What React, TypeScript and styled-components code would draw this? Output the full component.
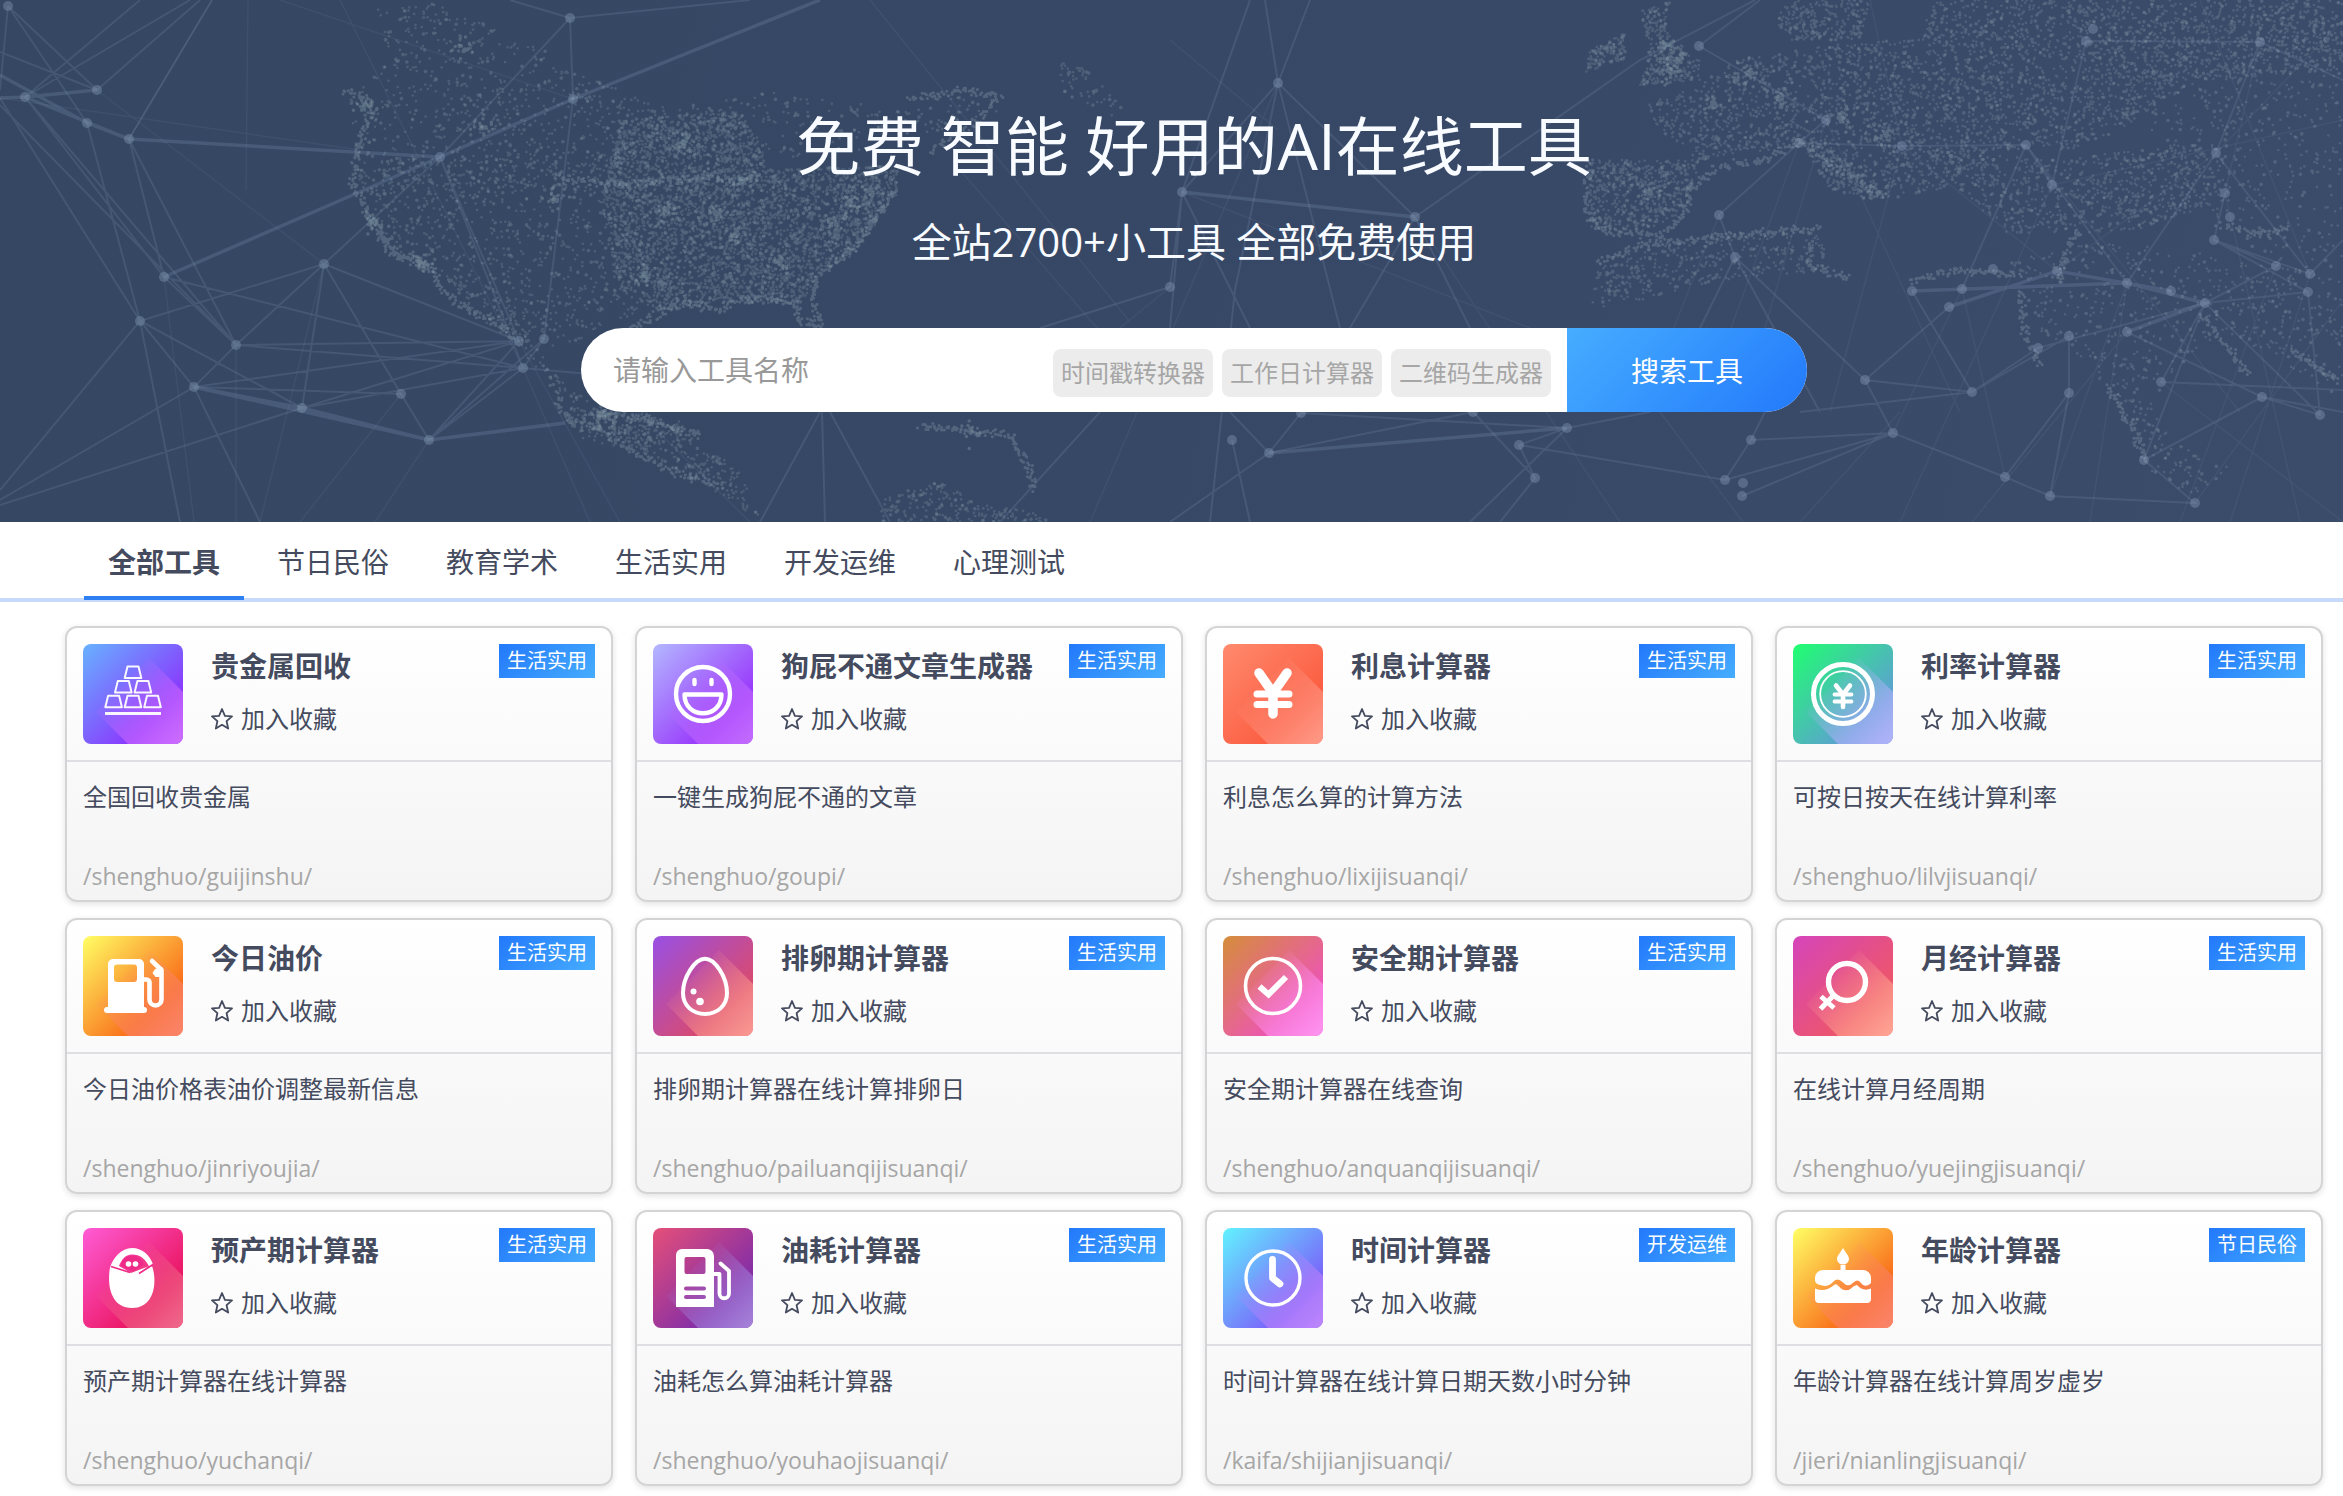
import React, { useId, useState } from 'react';
import styled, { createGlobalStyle } from 'styled-components';

const GlobalStyle = createGlobalStyle`
  *, *::before, *::after { box-sizing: border-box; }
  body {
    margin: 0;
    background: #fff;
    color: #454b5e;
    font-family: 'Open Sans', 'Noto Sans CJK SC', sans-serif;
    font-size: 24px;
  }
  h1, h2, p { margin: 0; font-weight: 400; }
  button, input { font: inherit; }
`;

/* ---------- hero backdrop: a dotted world map under a network of lines ---------- */

type Point = [number, number];

function createRandom(seed: number) {
  let state = seed;
  return () => {
    state = (state + 0x6d2b79f5) | 0;
    let t = Math.imul(state ^ (state >>> 15), 1 | state);
    t = (t + Math.imul(t ^ (t >>> 7), 61 | t)) ^ t;
    return ((t ^ (t >>> 14)) >>> 0) / 4294967296;
  };
}

function inside([x, y]: Point, shape: Point[]) {
  let hit = false;
  for (let i = 0, j = shape.length - 1; i < shape.length; j = i++) {
    const [xi, yi] = shape[i];
    const [xj, yj] = shape[j];
    if (yi > y !== yj > y && x < ((xj - xi) * (y - yi)) / (yj - yi) + xi) hit = !hit;
  }
  return hit;
}

const random = createRandom(20);

const dot = (x: number, y: number) => `M${x.toFixed(1)} ${y.toFixed(1)}h0.1`;

function fillDots(shape: Point[], count: number) {
  const xs = shape.map((p) => p[0]);
  const ys = shape.map((p) => p[1]);
  const left = Math.min(...xs);
  const top = Math.min(...ys);
  const width = Math.max(...xs) - left;
  const height = Math.max(...ys) - top;
  let path = '';
  let placed = 0;
  while (placed < count) {
    const p: Point = [left + random() * width, top + random() * height];
    if (inside(p, shape)) {
      path += dot(p[0], p[1]);
      placed += 1;
    }
  }
  return path;
}

function coastDots(line: Point[], spread: number) {
  let path = '';
  for (let i = 1; i < line.length; i++) {
    const [x1, y1] = line[i - 1];
    const [x2, y2] = line[i];
    const steps = Math.ceil(Math.hypot(x2 - x1, y2 - y1) / 1.4);
    for (let s = 0; s < steps; s++) {
      const t = s / steps;
      path += dot(
        x1 + (x2 - x1) * t + (random() + random() - 1) * spread,
        y1 + (y2 - y1) * t + (random() + random() - 1) * spread,
      );
    }
  }
  return path;
}

function cityDots([cx, cy]: Point) {
  let path = '';
  for (let i = 0; i < 26; i++) {
    const angle = random() * Math.PI * 2;
    const radius = random() * random() * 18;
    path += dot(cx + Math.cos(angle) * radius, cy + Math.sin(angle) * radius);
  }
  return path;
}

const regions: { shape: Point[]; count: number }[] = [
  { shape: [[370, 10], [430, 0], [520, 40], [600, 75], [660, 110], [600, 180], [500, 200], [360, 190], [350, 100], [390, 60]], count: 800 },
  { shape: [[355, 160], [620, 150], [640, 310], [560, 350], [470, 300], [430, 270], [395, 255], [372, 215]], count: 850 },
  { shape: [[620, 120], [740, 110], [770, 170], [900, 165], [897, 195], [875, 225], [860, 250], [815, 280], [800, 305], [720, 302], [660, 312], [620, 290], [600, 200]], count: 4200 },
  { shape: [[440, 270], [500, 290], [560, 380], [600, 410], [680, 420], [690, 440], [640, 450], [580, 425], [520, 350], [470, 310]], count: 260 },
  { shape: [[560, 410], [620, 400], [680, 430], [740, 470], [760, 520], [730, 500], [650, 455], [580, 440]], count: 300 },
  { shape: [[880, 500], [940, 480], [980, 505], [1030, 510], [1050, 522], [880, 522]], count: 200 },
  { shape: [[640, 110], [760, 90], [900, 110], [990, 90], [1000, 110], [880, 150], [780, 160]], count: 220 },
  { shape: [[1060, 60], [1090, 70], [1125, 110], [1110, 120], [1060, 90]], count: 60 },
  { shape: [[1640, 10], [1670, 0], [1665, 30], [1700, 60], [1700, 80], [1640, 85], [1650, 50]], count: 300 },
  { shape: [[1590, 50], [1625, 32], [1625, 60], [1585, 72]], count: 130 },
  { shape: [[1790, 0], [1870, 0], [1860, 40], [1790, 40], [1775, 20]], count: 240 },
  { shape: [[1735, 60], [1830, 45], [1920, 38], [1930, 0], [2343, 0], [2343, 70], [2200, 80], [2120, 130], [2070, 150], [1990, 150], [1940, 190], [1880, 200], [1810, 145], [1700, 160], [1670, 140], [1640, 105], [1700, 85]], count: 3600 },
  { shape: [[1590, 160], [1700, 160], [1685, 210], [1640, 235], [1590, 228]], count: 560 },
  { shape: [[1800, 140], [1830, 150], [1885, 190], [1870, 200], [1830, 190]], count: 180 },
  { shape: [[1600, 260], [1700, 235], [1820, 230], [1830, 270], [1720, 280], [1640, 300], [1590, 310]], count: 380 },
  { shape: [[1920, 150], [2060, 160], [2200, 140], [2225, 200], [2120, 235], [2010, 235], [1960, 190]], count: 800 },
  { shape: [[2100, 20], [2343, 20], [2343, 300], [2240, 240], [2160, 160]], count: 560 },
  { shape: [[2010, 260], [2110, 240], [2260, 260], [2343, 280], [2343, 400], [2280, 360], [2220, 330], [2150, 400], [2100, 380], [2040, 330]], count: 560 },
  { shape: [[2110, 380], [2150, 400], [2170, 440], [2240, 470], [2180, 500], [2140, 460]], count: 110 },
];

const coasts: Point[][] = [
  [[345, 90], [368, 98], [372, 118], [362, 128], [356, 155], [352, 185], [362, 200], [370, 218], [392, 254], [415, 258], [430, 272]],
  [[370, 218], [398, 256], [430, 266], [440, 285], [460, 305], [500, 325], [515, 340]],
  [[897, 190], [875, 218], [858, 245], [818, 275], [812, 300], [822, 325], [800, 322], [795, 300], [740, 298], [720, 310], [680, 302], [655, 315], [620, 335]],
  [[560, 180], [640, 184], [700, 178], [760, 180]],
  [[555, 395], [570, 420], [600, 430], [640, 455], [680, 475], [725, 485]],
  [[600, 412], [640, 418], [700, 435], [690, 430]],
  [[910, 100], [960, 90], [1000, 95], [980, 120], [930, 150]],
  [[920, 425], [960, 430], [1010, 435], [1030, 470], [1035, 490]],
  [[1590, 160], [1585, 210], [1600, 230], [1660, 235], [1685, 215], [1690, 190], [1720, 165], [1760, 162], [1800, 140], [1830, 165], [1885, 198]],
  [[1600, 262], [1640, 245], [1730, 235], [1820, 228]],
  [[1810, 245], [1810, 268], [1850, 278]],
  [[1910, 280], [1960, 270], [2020, 275]],
  [[2020, 290], [2025, 330], [2040, 368]],
  [[2060, 280], [2070, 240], [2080, 230]],
  [[2110, 385], [2120, 410], [2140, 440], [2145, 460]],
  [[2200, 315], [2230, 350], [2250, 375]],
  [[2290, 350], [2320, 370], [2340, 380]],
  [[2220, 225], [2260, 235], [2290, 228]],
];

const cities: Point[] = [
  [684, 145], [742, 180], [667, 210], [716, 213], [870, 190], [644, 275], [780, 262], [735, 235], [482, 127],
  [557, 200], [465, 50], [614, 422], [972, 432], [1670, 72], [1712, 103], [1737, 80], [1650, 192], [1886, 136], [1840, 118],
  [850, 205], [835, 222], [365, 105], [372, 222], [420, 262], [600, 415], [1680, 60], [1665, 45], [1750, 72], [1780, 100],
];

const dots = regions.map((r) => fillDots(r.shape, Math.round(r.count * 0.75))).join('');
const brightDots = regions.map((r) => fillDots(r.shape, Math.round(r.count * 0.2))).join('');
const coastline = coasts.map((c) => coastDots(c, 5)).join('');
const cityPath = cities.map(cityDots).join('');

const nodes: Point[] = [
  [8, 6], [97, 90], [25, 97], [87, 123], [129, 139], [570, 18], [573, 99], [440, 157], [324, 264], [164, 277],
  [140, 321], [236, 345], [194, 387], [302, 408], [401, 394], [429, 440], [519, 341], [544, 339], [523, 368],
  [1170, 287], [1278, 83], [1182, 192], [1415, 217], [1232, 440], [1269, 453], [1301, 413], [1567, 428],
  [1519, 445], [1535, 478], [1473, 412], [1699, 46], [1826, 120], [1799, 143], [1719, 215], [1735, 257],
  [1902, 146], [2026, 145], [2052, 185], [2086, 41], [2093, 29], [2260, 42], [2216, 153], [2225, 193],
  [2230, 217], [2214, 240], [1993, 269], [2057, 271], [1912, 291], [1962, 289], [1949, 307], [2127, 283],
  [2171, 291], [2205, 303], [2276, 266], [2310, 274], [2308, 292], [2127, 332], [2069, 336], [2038, 348],
  [1865, 380], [1972, 392], [2069, 393], [1893, 433], [1751, 440], [1725, 480], [1743, 483], [1742, 496],
  [2005, 477], [2050, 496], [2144, 460], [2195, 503], [2161, 382], [2262, 397], [2320, 415],
];

const strongLines =
  'M0 75L87 123L129 139L440 157L573 99L820 0M440 157L164 277M302 408L194 387L429 440L565 423M302 408L429 440M0 98L25 97L97 90M25 97L129 139' +
  'M2127 283L2205 303L2127 332M1949 307L2057 271L2171 291M1912 291L2127 283M2205 303L2127 283M1182 192L1415 217M1269 453L1567 428';

const mediumLines =
  'M8 6L87 123M8 6L97 90M0 52L97 90M25 97L140 0M25 97L190 0M129 139L212 0M97 90L200 0M8 6L0 90M0 98L140 321L0 490M0 105L236 345M25 97L236 345M25 97L164 277M87 123L140 321M129 139L164 277M129 139L236 345' +
  'M510 0L570 18L750 0M570 18L573 99M570 18L440 157M573 99L544 339L523 368M440 157L324 264M440 157L519 341M440 157L523 368M324 264L140 321L302 408M324 264L236 345L519 341M324 264L519 341M324 264L401 394L429 440M324 264L302 408' +
  'M164 277L523 368L600 375M164 277L236 345L523 368M236 345L194 387L0 500M194 387L401 394M194 387L519 341M302 408L519 341M302 408L0 505M302 408L523 368L429 440L519 341M544 339L429 440M140 321L194 387L260 522M140 321L180 522' +
  'M1250 0L1182 192L1170 287M1310 0L1278 83L1182 192M1278 83L1235 290L1210 522M1278 83L1340 328M1265 0L1278 83L1415 217L1640 60L1755 0M1415 217L1350 328M1415 217L1470 328M1170 287L1040 328M1182 192L1250 328M1182 192L1170 328' +
  'M820 412L760 522M822 412L825 522M830 412L890 522M1100 412L1000 522M1230 412L1269 453L1301 413M1232 440L1250 522M1269 453L1473 412M1269 453L1170 522M1301 413L1567 428L1519 445L1535 478L1500 522M1473 412L1535 478M1519 445L1725 480L1893 433L1751 440L1765 412M1567 428L1650 412M1567 428L1470 522' +
  'M1699 46L1760 0M1699 46L1826 120L1799 143L1719 215L1735 257L1700 328M1799 143L1902 146L2026 145L2052 185M2026 145L1962 289M2026 145L2127 283M2086 41L2260 42L2343 80M2086 41L2052 185M2260 42L2216 153L2310 274M2216 153L2127 283' +
  'M2225 193L2214 240L2310 274M2214 240L2308 292M2214 240L2276 266L2205 303M2310 274L2343 240M2308 292L2205 303L2161 382L2343 390M1735 257L1865 380M1735 257L1820 412M1912 291L1972 392L2038 348L2205 303M1949 307L1865 380L1972 392L2069 336' +
  'M1865 380L1893 433L2005 477L2050 496L2195 503L2144 460L2205 303M1893 433L1742 496M1751 440L1725 480M2069 336L2069 393L2005 477M2069 393L2050 496M2127 332L2262 397L2343 412M2262 397L2144 460M2262 397L2320 415L2308 292M2205 303L2320 415M1972 392L1800 412';

const faintLines =
  'M0 98L360 150M97 90L324 264M248 0L246 190M280 0L573 99M212 0L129 139M340 0L523 368M164 277L194 522M236 345L236 522M324 264L260 522M401 394L300 522M429 440L375 522M600 375L750 522M523 368L590 522M519 341L620 522' +
  'M870 0L1130 322M960 170L1170 412M1170 40L1278 130M1278 83L1090 522M1182 192L1530 328M1415 217L1620 522M1170 287L1120 328M1826 120L1740 412M1799 143L1700 412M1719 215L1640 412M1826 120L1960 412M1902 146L2057 271M1870 0L1902 146L1830 412M2052 185L2343 120M2052 185L1900 522M2026 145L2240 412' +
  'M2200 0L2310 274M2343 20L2216 153L2057 271M2260 42L2225 193L2300 522M2310 274L2230 522M2276 266L2180 522M2127 283L2050 496M2127 283L2090 522M1962 289L1893 433M1962 289L2005 477M2127 332L1972 522M1660 412L1743 522M1900 412L1800 522M2343 300L2195 503M2161 382L2343 522';

const Backdrop = styled.svg`
  position: absolute;
  inset: 0;
  width: 100%;
  height: 100%;
`;

function HeroBackdrop() {
  return (
    <Backdrop viewBox="0 0 2343 522" preserveAspectRatio="xMidYMid slice" aria-hidden="true">
      <g fill="none" stroke="#8fa6b0" strokeLinecap="round">
        <path d={dots} strokeWidth="2.6" opacity="0.24" />
        <path d={brightDots} strokeWidth="3.6" opacity="0.28" />
        <path d={coastline} strokeWidth="3" opacity="0.32" />
        <path d={cityPath} strokeWidth="3.4" opacity="0.34" />
      </g>
      <g fill="none" stroke="#8aa0bd">
        <path d={strongLines} strokeWidth="3.5" opacity="0.22" />
        <path d={mediumLines} strokeWidth="2" opacity="0.18" />
        <path d={faintLines} strokeWidth="1.5" opacity="0.1" />
      </g>
      <g fill="#8ea3bd" opacity="0.36">
        {nodes.map(([x, y]) => (
          <circle key={`${x}-${y}`} cx={x} cy={y} r="5" />
        ))}
      </g>
    </Backdrop>
  );
}

/* ---------- hero ---------- */

const Hero = styled.header`
  position: relative;
  padding: 104px 0 110px 45px;
  background: linear-gradient(100deg, #354762 0%, #374866 50%, #3b4b6a 100%);
`;

const HeroContent = styled.div`
  position: relative;
  display: flex;
  flex-direction: column;
  align-items: center;
  color: #f8fbff;
`;

const Title = styled.h1`
  font-size: 64px;
  line-height: 84px;
`;

const Subtitle = styled.p`
  margin-top: 24px;
  font-size: 40px;
  line-height: 60px;
`;

const SearchForm = styled.form`
  display: flex;
  width: 1226px;
  max-width: 100%;
  height: 84px;
  margin-top: 56px;
  border-radius: 42px;
  overflow: hidden;
  background: #fff;
`;

const SearchInput = styled.input`
  flex: 1;
  min-width: 0;
  padding: 0 32px;
  border: 0;
  outline: 0;
  background: transparent;
  color: #454b5e;
  font-size: 28px;
  &::placeholder { color: #999; opacity: 1; }
`;

const HotList = styled.div`
  display: flex;
  align-items: center;
  gap: 9px;
  padding-top: 6px;
  margin-right: 16px;
`;

const HotLink = styled.a`
  padding: 0 8px;
  border-radius: 8px;
  background: #ececec;
  color: #a6a6a6;
  font-size: 24px;
  line-height: 48px;
  text-decoration: none;
`;

const SearchButton = styled.button`
  width: 240px;
  border: 0;
  background: linear-gradient(135deg, #46adff 0%, #2379fb 100%);
  color: #fff;
  font-size: 28px;
  cursor: pointer;
`;

/* ---------- category tabs ---------- */

const Tabs = styled.nav`
  display: flex;
  gap: 9px;
  height: 80px;
  padding-left: 84px;
  border-bottom: 4px solid #c7dafc;
`;

const Tab = styled.button<{ $active: boolean }>`
  width: 160px;
  height: 78px;
  padding: 4px 0 0;
  border: 0;
  border-bottom: 4px solid ${(p) => (p.$active ? '#2e80f2' : 'transparent')};
  background: none;
  color: #454b5e;
  font-size: 28px;
  font-weight: ${(p) => (p.$active ? 700 : 400)};
  cursor: pointer;
`;

/* ---------- tool cards ---------- */

const Grid = styled.main`
  display: grid;
  grid-template-columns: repeat(4, minmax(0, 1fr));
  gap: 16px 22px;
  padding: 24px 20px 10px 65px;
`;

const Card = styled.article`
  border: 2px solid #d4d4d6;
  border-radius: 12px;
  background: linear-gradient(#fff, #f4f4f4);
  box-shadow: 0 2px 6px rgba(0, 0, 0, 0.12);
`;

const CardHead = styled.div`
  display: flex;
  align-items: flex-start;
  padding: 16px;
  border-bottom: 2px solid #dfdfe3;
`;

const IconTile = styled.svg`
  flex: none;
  width: 100px;
  height: 100px;
  border-radius: 8px;
`;

const CardInfo = styled.div`
  display: flex;
  flex: 1;
  flex-direction: column;
  align-items: flex-start;
  gap: 12px;
  min-width: 0;
  margin-left: 28px;
`;

const CardTitle = styled.h2`
  font-size: 28px;
  font-weight: 700;
  line-height: 44px;
  white-space: nowrap;
`;

const FavouriteButton = styled.button`
  display: flex;
  align-items: center;
  gap: 8px;
  padding: 0;
  border: 0;
  background: none;
  color: #454b5e;
  font-size: 24px;
  line-height: 38px;
  cursor: pointer;
`;

const CategoryTag = styled.span`
  padding: 0 8px;
  background: linear-gradient(135deg, #2379fb, #46adff);
  color: #fff;
  font-size: 20px;
  line-height: 34px;
  white-space: nowrap;
`;

const CardBody = styled.div`
  display: flex;
  flex-direction: column;
  gap: 40px;
  padding: 16px 16px 4px;
`;

const Description = styled.p`
  line-height: 38px;
`;

const ToolPath = styled.a`
  color: #a6a6a6;
  font-size: 23px;
  line-height: 40px;
  text-decoration: none;
`;

const StarShape = styled.svg`
  width: 22px;
  height: 22px;
`;

function Star() {
  return (
    <StarShape viewBox="0 0 22 22" aria-hidden="true">
      <path
        d="M11 1L13.9 7.800L21 8.400L15.600 13.200L17.200 20.600L11 16.800L4.800 20.600L6.400 13.200L1 8.400L8.100 7.800Z"
        fill="none"
        stroke="currentColor"
        strokeWidth="1.800"
        strokeLinejoin="round"
      />
    </StarShape>
  );
}

/* ---------- tool icons, drawn on a 100 × 100 tile ---------- */

const ingot = (x: number, y: number) => `M${x + 2.8} ${y}h11l2.8 11.5h-16.6z`;

const glyphs: Record<string, React.ReactNode> = {
  gold: (
    <g fill="none" stroke="#fff" strokeWidth="2" strokeLinejoin="round" opacity="0.95">
      <path d={ingot(41.7, 22.5) + ingot(32, 37) + ingot(51.6, 37) + ingot(22.3, 51.7) + ingot(41.7, 51.7) + ingot(61.2, 51.7)} />
      <path d="M22 69.5h56" strokeWidth="3" />
    </g>
  ),
  smile: (
    <g fill="none" stroke="#fff" strokeWidth="4.4" strokeLinejoin="round" strokeLinecap="round">
      <circle cx="50" cy="50" r="27" />
      <path d="M31.5 50.5h37c0 25-37 25-37 0z" />
      <path d="M41.5 36v4M58.5 36v4" />
    </g>
  ),
  yuan: (
    <g fill="none" stroke="#fff" strokeLinecap="round">
      <path d="M36 29L50 49L64 29M50 48V70" strokeWidth="9.5" />
      <path d="M34 50h32M34 60.5h32" strokeWidth="7" />
    </g>
  ),
  coin: (
    <g fill="none" stroke="#fff" strokeLinecap="round">
      <circle cx="50" cy="50" r="29.5" strokeWidth="5" />
      <circle cx="50" cy="50" r="22.8" strokeWidth="1.8" />
      <path d="M43 41.5L50 50.5L57 41.5M50 50V63" strokeWidth="4.6" />
      <path d="M41.5 50.5h17M41.5 57.5h17" strokeWidth="3.8" />
    </g>
  ),
  pump: (
    <g>
      <path fill="#fff" fillRule="evenodd" d="M30 23h26a5 5 0 0 1 5 5v44h-36v-44a5 5 0 0 1 5-5zM34 28.5a3 3 0 0 0-3 3v11.5a3 3 0 0 0 3 3h17a3 3 0 0 0 3-3v-11.5a3 3 0 0 0-3-3z" />
      <path d="M24 74h37" stroke="#fff" strokeWidth="6" strokeLinecap="round" />
      <path d="M61 43.5h2.5a3 3 0 0 1 3 3v17a6 6 0 0 0 12 0V34L69 25" fill="none" stroke="#fff" strokeWidth="4.6" strokeLinecap="round" strokeLinejoin="round" />
      <path d="M72 33l-2.5 4 3 4h7v-10z" fill="#fff" />
    </g>
  ),
  egg: (
    <g>
      <path d="M52 22.8C42 22.8 30 41 30 57C30 70 40 78 52 78S74 70 74 57C74 41 62 22.8 52 22.8Z" fill="none" stroke="#fff" strokeWidth="4" />
      <circle cx="40.5" cy="55.5" r="3" fill="#fff" />
      <circle cx="47" cy="65.5" r="3.8" fill="#fff" />
    </g>
  ),
  check: (
    <g fill="none" stroke="#fff">
      <circle cx="50" cy="50" r="27.5" strokeWidth="3.6" />
      <path d="M36.5 50.5L45.5 58.5L63 41" strokeWidth="6" />
    </g>
  ),
  female: (
    <g fill="none" stroke="#fff">
      <circle cx="54" cy="46" r="18.5" strokeWidth="5.4" />
      <path d="M41 59L27.5 73M28 60.5L41 72" strokeWidth="5" />
    </g>
  ),
  baby: (
    <g>
      <path fill="#fff" d="M27 39.5C30 30 38 20 49 20S67 28 70 36.5L66.5 39.5C63 31 57 26.5 49 26.5C42 26.5 38.5 32 36 38L48 45L65 38.5L55 46.5L69 38C74 51 73 80 49 80C27 80 24 56 27 39.5Z" />
      <path fill="#ee2c88" d="M37.5 37.5Q40 27.5 49 27.5Q58 27.5 61 36.500L50 43.500Z" />
      <path d="M28 38.5L47 44.5M56 45.5L70 36.500" fill="none" stroke="#ee2c88" strokeWidth="1.6" />
      <circle cx="45.5" cy="36" r="2.8" fill="#fff" />
      <circle cx="52.5" cy="36" r="2.8" fill="#fff" />
    </g>
  ),
  station: (
    <g>
      <path fill="#fff" fillRule="evenodd" d="M29 21h25a7 7 0 0 1 7 7v51h-38V27a6 6 0 0 1 6-6zM33.5 29a2 2 0 0 0-2 2v13a2 2 0 0 0 2 2h17a2 2 0 0 0 2-2v-13a2 2 0 0 0-2-2zM33 58.5a2 2 0 0 0 0 4h18a2 2 0 0 0 0-4zM33 67a2 2 0 0 0 0 4h18a2 2 0 0 0 0-4z" />
      <path d="M60 46h6.5v19.5a4.5 4.5 0 0 0 9.5 0V43L67.5 35.5" fill="none" stroke="#fff" strokeWidth="3.8" strokeLinecap="round" strokeLinejoin="round" />
    </g>
  ),
  clock: (
    <g fill="none" stroke="#fff" strokeLinecap="round" strokeLinejoin="round">
      <circle cx="50" cy="50" r="27" strokeWidth="3.4" />
      <path d="M49.5 31.5V50L57 56" strokeWidth="6.8" />
    </g>
  ),
  cake: (
    <g fill="#fff">
      <path d="M50 20C53 25 56 28 56 31A6 5.5 0 0 1 44 31C44 28 47 25 50 20Z" />
      <path d="M47.5 37h5v6h-5z" />
      <path d="M30 42h40a8 8 0 0 1 8 8v5Q75 58.5 71.500 57.5Q69.5 57 67.5 54.5Q64.5 50.5 60.5 54.5Q55 60 50 54.500Q44 48.500 39.500 54.500Q35 59 29 57.500Q23 56.5 22 53V50a8 8 0 0 1 8-8z" />
      <path d="M22 60.5Q32 65 41 57Q43 55 46 58.500Q52 65 58 60.500Q61 57 64 57Q70 64 78 60.5V71a4 4 0 0 1-4 4H26a4 4 0 0 1-4-4z" />
    </g>
  ),
};

interface Tool {
  title: string;
  description: string;
  path: string;
  category: string;
  icon: keyof typeof glyphs;
  colors: [string, string, string];
}

function ToolIcon({ icon, colors }: Pick<Tool, 'icon' | 'colors'>) {
  const id = useId().replace(/:/g, '');
  return (
    <IconTile viewBox="0 0 100 100" aria-hidden="true">
      <defs>
        <linearGradient id={`${id}bg`} x1="0" y1="0" x2="1" y2="1">
          <stop offset="0" stopColor={colors[0]} />
          <stop offset="0.75" stopColor={colors[1]} />
          <stop offset="1" stopColor={colors[1]} />
        </linearGradient>
        <linearGradient id={`${id}ray`} gradientUnits="userSpaceOnUse" x1="35" y1="35" x2="100" y2="100">
          <stop offset="0" stopColor={colors[2]} stopOpacity="0" />
          <stop offset="1" stopColor={colors[2]} />
        </linearGradient>
      </defs>
      <path d="M0 0h100v100H0z" fill={`url(#${id}bg)`} />
      <path d="M66 14L100 48V100H45L13 68Z" fill={`url(#${id}ray)`} />
      {glyphs[icon]}
    </IconTile>
  );
}

const tools: Tool[] = [
  { title: '贵金属回收', description: '全国回收贵金属', path: '/shenghuo/guijinshu/', category: '生活实用', icon: 'gold', colors: ['#67b2ff', '#8b35fd', '#d06eff'] },
  { title: '狗屁不通文章生成器', description: '一键生成狗屁不通的文章', path: '/shenghuo/goupi/', category: '生活实用', icon: 'smile', colors: ['#b3b8ff', '#9836fb', '#c46cff'] },
  { title: '利息计算器', description: '利息怎么算的计算方法', path: '/shenghuo/lixijisuanqi/', category: '生活实用', icon: 'yuan', colors: ['#ff8a6e', '#fb5c40', '#ff9a88'] },
  { title: '利率计算器', description: '可按日按天在线计算利率', path: '/shenghuo/lilvjisuanqi/', category: '生活实用', icon: 'coin', colors: ['#1fff70', '#5da0d2', '#b3b3fa'] },
  { title: '今日油价', description: '今日油价格表油价调整最新信息', path: '/shenghuo/jinriyoujia/', category: '生活实用', icon: 'pump', colors: ['#ffff65', '#f96a18', '#fa846c'] },
  { title: '排卵期计算器', description: '排卵期计算器在线计算排卵日', path: '/shenghuo/pailuanqijisuanqi/', category: '生活实用', icon: 'egg', colors: ['#9850e5', '#da4a6d', '#fa9a92'] },
  { title: '安全期计算器', description: '安全期计算器在线查询', path: '/shenghuo/anquanqijisuanqi/', category: '生活实用', icon: 'check', colors: ['#d58d3a', '#ed55b5', '#ff94f2'] },
  { title: '月经计算器', description: '在线计算月经周期', path: '/shenghuo/yuejingjisuanqi/', category: '生活实用', icon: 'female', colors: ['#d545bb', '#ee5668', '#ffa694'] },
  { title: '预产期计算器', description: '预产期计算器在线计算器', path: '/shenghuo/yuchanqi/', category: '生活实用', icon: 'baby', colors: ['#ff5cd6', '#ea1560', '#ef6a8b'] },
  { title: '油耗计算器', description: '油耗怎么算油耗计算器', path: '/shenghuo/youhaojisuanqi/', category: '生活实用', icon: 'station', colors: ['#e54f79', '#812da8', '#a584dc'] },
  { title: '时间计算器', description: '时间计算器在线计算日期天数小时分钟', path: '/kaifa/shijianjisuanqi/', category: '开发运维', icon: 'clock', colors: ['#62f3ff', '#7a62fa', '#bf86fb'] },
  { title: '年龄计算器', description: '年龄计算器在线计算周岁虚岁', path: '/jieri/nianlingjisuanqi/', category: '节日民俗', icon: 'cake', colors: ['#ffff65', '#f96a18', '#fa846c'] },
];

const categories = ['全部工具', '节日民俗', '教育学术', '生活实用', '开发运维', '心理测试'];

const hotTools = ['时间戳转换器', '工作日计算器', '二维码生成器'];

function ToolCard({ tool }: { tool: Tool }) {
  return (
    <Card>
      <CardHead>
        <ToolIcon icon={tool.icon} colors={tool.colors} />
        <CardInfo>
          <CardTitle>{tool.title}</CardTitle>
          <FavouriteButton type="button">
            <Star />
            加入收藏
          </FavouriteButton>
        </CardInfo>
        <CategoryTag>{tool.category}</CategoryTag>
      </CardHead>
      <CardBody>
        <Description>{tool.description}</Description>
        <ToolPath href={tool.path}>{tool.path}</ToolPath>
      </CardBody>
    </Card>
  );
}

export default function App() {
  const [active, setActive] = useState(categories[0]);
  return (
    <>
      <GlobalStyle />
      <Hero>
        <HeroBackdrop />
        <HeroContent>
          <Title>免费 智能 好用的AI在线工具</Title>
          <Subtitle>全站2700+小工具 全部免费使用</Subtitle>
          <SearchForm onSubmit={(e) => e.preventDefault()}>
            <SearchInput type="text" aria-label="请输入工具名称" placeholder="请输入工具名称" />
            <HotList>
              {hotTools.map((name) => (
                <HotLink key={name} href="#">{name}</HotLink>
              ))}
            </HotList>
            <SearchButton type="submit">搜索工具</SearchButton>
          </SearchForm>
        </HeroContent>
      </Hero>
      <Tabs>
        {categories.map((name) => (
          <Tab key={name} type="button" $active={name === active} onClick={() => setActive(name)}>
            {name}
          </Tab>
        ))}
      </Tabs>
      <Grid>
        {tools.map((tool) => (
          <ToolCard key={tool.path} tool={tool} />
        ))}
      </Grid>
    </>
  );
}
